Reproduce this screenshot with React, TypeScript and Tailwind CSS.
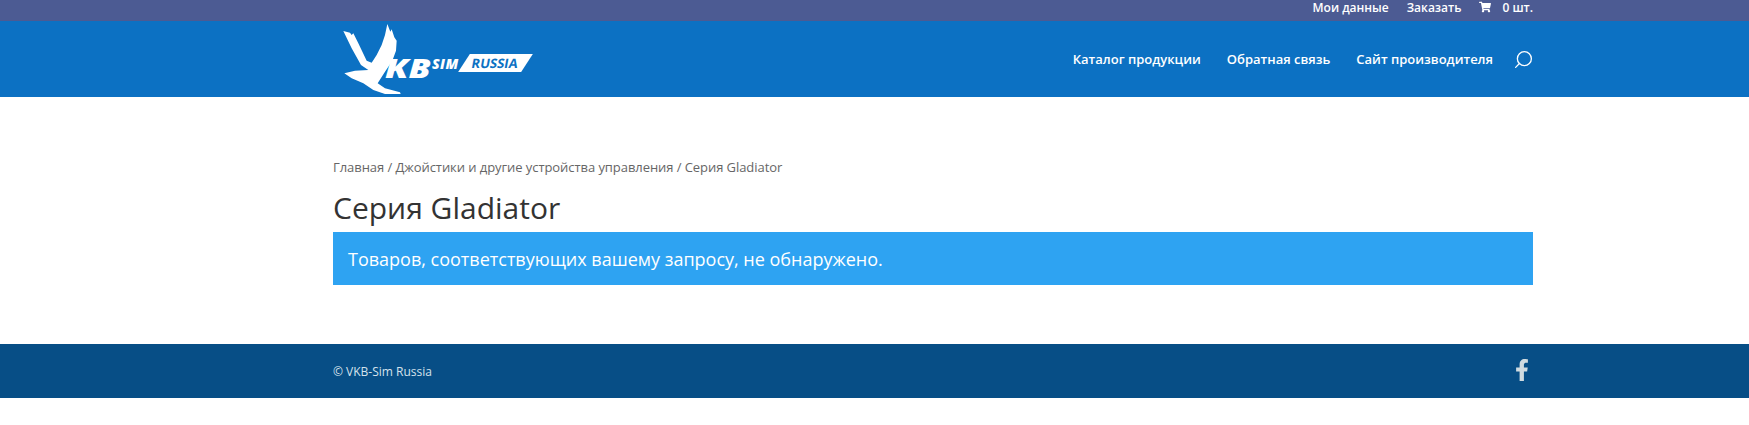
import { Search } from "lucide-react";
import { FaFacebookF, FaShoppingCart } from "react-icons/fa";

const navLinks = ["Каталог продукции", "Обратная связь", "Сайт производителя"];

function Logo() {
  return (
    <div className="relative ml-[10px] h-[76px] w-[190px] shrink-0">
      {/* bird */}
      <svg viewBox="0 0 300 234" className="absolute left-[-8px] top-[-1px] h-[78px] w-[100px]" fill="#fff">
        <path d="M25 33 L45 38 L50 45 L55 40 L70 70 L95 122 L110 128 L125 105 L140 75 L150 45 L157 12 L166 35 L170 28 L178 52 L185 62 L183 92 L172 122 L150 155 L128 190 L150 205 L195 217 L197 222 L150 222 L115 210 L85 190 L50 175 L28 160 L60 152 L100 150 L78 135 L50 85 Z" />
      </svg>
      <span className="absolute left-[42px] top-[32px] origin-left scale-x-[1.3] font-['Open_Sans',sans-serif] text-[27px] leading-[30px] font-extrabold italic text-white">
        KB
      </span>
      <span className="absolute left-[89px] top-[35px] font-['Open_Sans',sans-serif] text-[14px] leading-[16px] font-extrabold tracking-[0.4px] italic text-white">
        SIM
      </span>
      <div className="absolute left-[121px] top-[33px] flex h-[18px] w-[63px] -skew-x-[33deg] items-center justify-center bg-white">
        <span className="skew-x-[25deg] font-['Open_Sans',sans-serif] text-[13px] leading-none font-bold text-[#0c71c3]">
          RUSSIA
        </span>
      </div>
    </div>
  );
}

export default function App() {
  return (
    <div className="min-h-[425px] bg-white font-['Open_Sans',sans-serif]">
      {/* Top bar */}
      <div className="h-[21px] bg-[#4c5b93]">
        <div className="ml-[333px] flex h-full w-[1200px] items-center justify-end gap-[18px] pb-[5px] text-[12px] font-semibold text-white">
          <span>Мои данные</span>
          <span>Заказать</span>
          <span className="flex items-center gap-[11px]">
            <FaShoppingCart size={12} className="-mt-[3px]" />
            0 шт.
          </span>
        </div>
      </div>

      {/* Header */}
      <header className="h-[76px] bg-[#0c71c3]">
        <div className="ml-[333px] flex h-full w-[1200px] items-center justify-between">
          <Logo />
          <nav className="flex items-center gap-[26px] pt-[1px] text-[13px] font-semibold text-white">
            {navLinks.map((link) => (
              <a key={link}>{link}</a>
            ))}
            <Search size={21} strokeWidth={1.5} className="-ml-[6px] -mr-[1px] -scale-x-100" />
          </nav>
        </div>
      </header>

      {/* Content */}
      <main className="ml-[333px] w-[1200px] pt-[60px] pb-[59px]">
        <div className="text-[13px] leading-[20px] tracking-[-0.065px] text-[#666]">
          Главная / Джойстики и другие устройства управления / Серия Gladiator
        </div>
        <h1 className="mt-[9px] mb-[3px] text-[30px] leading-[43px] font-normal text-[#333]">Серия Gladiator</h1>
        <div className="bg-[#2ea3f2] px-[15px] pt-[14px] pb-[12px] text-[18px] leading-[27px] text-white">
          Товаров, соответствующих вашему запросу, не обнаружено.
        </div>
      </main>

      {/* Footer */}
      <footer className="h-[54px] bg-[#074e86]">
        <div className="ml-[333px] flex h-full w-[1200px] items-center justify-between text-[12px] text-[#d5e2ec]">
          <span className="pt-[2px]">© VKB-Sim Russia</span>
          <FaFacebookF size={22} className="-mt-[2px] text-[#d0dbe0]" />
        </div>
      </footer>
    </div>
  );
}
